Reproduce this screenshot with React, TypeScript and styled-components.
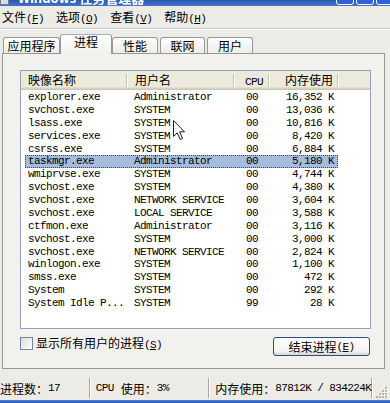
import React from 'react';
import styled, { createGlobalStyle } from 'styled-components';

const Global = createGlobalStyle`
  html, body { margin: 0; padding: 0; background: #ECEBE5; }
  body {
    width: 390px; height: 403px; overflow: hidden;
    font-family: "Noto Sans CJK SC", sans-serif;
    font-size: 12px; color: #000;
  }
  * { box-sizing: border-box; }
`;

const Root = styled.div`
  position: relative;
  width: 390px;
  height: 403px;
  overflow: hidden;
  background: #ECEBE5;
  display: flex;
  flex-direction: column;
`;

const Lat = styled.span<{ $gap?: number }>`
  font-family: "Liberation Mono", monospace;
  font-size: 11px;
  letter-spacing: -0.6px;
  margin-right: ${p => p.$gap ?? 0}px;
`;

const Key = styled.span`
  text-decoration: underline;
  text-underline-offset: 1px;
`;

/* ---------- title bar ---------- */
const TitleBar = styled.div`
  flex-shrink: 0;
  height: 6px;
  overflow: hidden;
  display: flex;
  align-items: flex-end;
  background: linear-gradient(to bottom, #2A58B0, #4474C8);
`;
const TitleIcon = styled.div`
  width: 9px;
  height: 12px;
  margin-bottom: 1px;
  background: #D9DCE4;
  border: 1px solid #6C7A94;
`;
const TitleText = styled.div`
  margin-left: 9px;
  margin-bottom: 1px;
  color: #fff;
  font-weight: bold;
  font-size: 13px;
  line-height: 14px;
  white-space: nowrap;
`;
const TitleButtons = styled.div`
  margin-left: auto;
  margin-right: -4px;
  display: flex;
  gap: 2px;
  align-items: flex-end;
`;
const WinBtn = styled.div`
  width: 18px;
  height: 18px;
  margin-bottom: 1px;
  border: 1px solid #fff;
  border-radius: 3px;
  background: #2F62D2;
`;

/* ---------- menu ---------- */
const MenuBar = styled.div`
  flex-shrink: 0;
  height: 22px;
  display: flex;
  align-items: center;
  gap: 12px;
  padding: 1px 0 0 2px;
`;
const MenuItem = styled.div`
  white-space: nowrap;
  line-height: 14px;
`;
const MenuSep = styled.div`
  flex-shrink: 0;
  height: 2px;
  border-top: 1px solid #BCCBE0;
  border-bottom: 1px solid #FFFFFF;
`;

/* ---------- tabs + panel ---------- */
const Body = styled.div`
  flex-shrink: 0;
  padding: 4px 5px 0 2px;
  display: flex;
  flex-direction: column;
`;
const TabStrip = styled.div`
  position: relative;
  z-index: 1;
  height: 19px;
  display: flex;
  align-items: flex-end;
  padding-left: 1px;
`;
const Tab = styled.div<{ $w: number; $active?: boolean }>`
  width: ${p => (p.$active ? p.$w + 4 : p.$w)}px;
  height: ${p => (p.$active ? 20 : 16)}px;
  margin: ${p => (p.$active ? '0 0 -1px -2px' : '0 2px 0 0')};
  border: 1px solid #919B9C;
  border-bottom: none;
  border-top-color: ${p => (p.$active ? '#9EB0CC' : '#919B9C')};
  border-radius: 3px 3px 0 0;
  background: ${p => (p.$active
    ? 'linear-gradient(to bottom, #FFFFFF, #F2F1ED)'
    : 'linear-gradient(to bottom, #FEFEFE, #EEEDE8)')};
  display: flex;
  justify-content: center;
  align-items: ${p => (p.$active ? 'flex-start' : 'center')};
  line-height: 14px;
  white-space: nowrap;
`;
const Panel = styled.div`
  height: 316px;
  border: 1px solid #919B9C;
  background: #F2F1ED;
  padding: 16px 13px 13px 17px;
  display: flex;
  flex-direction: column;
`;

/* ---------- list ---------- */
const ListBox = styled.div`
  height: 259px;
  border: 1px solid #8FA3BE;
  background: #fff;
  overflow: hidden;
`;
const Header = styled.div`
  height: 19px;
  display: flex;
  background: #EBEADB;
  box-shadow: inset 0 -1px #CBC7B8, inset 0 -2px #D6D2C2, inset 0 -3px #E2DECD;
`;
const HeadCell = styled.div<{ $w: number; $pl?: number; $pr?: number; $right?: boolean }>`
  position: relative;
  width: ${p => p.$w}px;
  padding-left: ${p => p.$pl ?? 0}px;
  padding-right: ${p => p.$pr ?? 0}px;
  text-align: ${p => (p.$right ? 'right' : 'left')};
  line-height: 18px;
  white-space: nowrap;
  &::after {
    content: '';
    position: absolute;
    right: 0;
    top: 3px;
    bottom: 3px;
    width: 1px;
    background: #C7C5B2;
    box-shadow: 1px 0 #FFFFFF;
  }
`;
const Rows = styled.div`
  padding-top: 1px;
`;
const Row = styled.div<{ $sel?: boolean }>`
  display: grid;
  grid-template-columns: 106px 107px 31px 69px;
  width: 313px;
  margin-left: 4px;
  height: 12.875px;
  line-height: 12.875px;
  white-space: nowrap;
  background: ${p => (p.$sel ? '#A6BCDD' : 'transparent')};
  outline: ${p => (p.$sel ? '1px dotted #3A4A66' : 'none')};
  outline-offset: -1px;
  font-family: "Liberation Mono", monospace;
  font-size: 11px;
  letter-spacing: -0.6px;
`;
const Cell = styled.div<{ $pl?: number; $pr?: number; $right?: boolean }>`
  padding-left: ${p => p.$pl ?? 0}px;
  padding-right: ${p => p.$pr ?? 0}px;
  text-align: ${p => (p.$right ? 'right' : 'left')};
  overflow: hidden;
`;

/* ---------- bottom row ---------- */
const BottomRow = styled.div`
  margin-top: 8px;
  height: 18px;
  display: flex;
  align-items: flex-start;
  justify-content: space-between;
`;
const CheckLabel = styled.label`
  display: flex;
  align-items: center;
  gap: 3px;
  height: 13px;
  line-height: 13px;
  white-space: nowrap;
`;
const CheckBox = styled.span`
  width: 13px;
  height: 13px;
  border: 1px solid #6F86A8;
  background: linear-gradient(135deg, #DCDCD7, #FFFFFF);
`;
const Button = styled.div`
  width: 97px;
  height: 19px;
  margin-right: 1px;
  border: 1px solid #2C4F7C;
  border-radius: 3px;
  background: linear-gradient(to bottom, #FFFFFF, #F2F1EC 80%, #D9D5CB);
  display: flex;
  align-items: center;
  justify-content: center;
  line-height: 14px;
  white-space: nowrap;
`;

/* ---------- status bar ---------- */
const StatusBar = styled.div`
  flex-shrink: 0;
  height: 31px;
  padding: 9px 0 2px 0;
  display: flex;
`;
const Pane = styled.div<{ $w?: number; $pl: number; $grow?: boolean }>`
  ${p => (p.$w ? `width: ${p.$w}px;` : '')}
  ${p => (p.$grow ? 'flex: 1;' : '')}
  padding-left: ${p => p.$pl}px;
  display: flex;
  align-items: center;
  white-space: pre;
  border-right: 1px solid #ACA899;
  box-shadow: 1px 0 #FFFFFF;
  margin-right: 1px;
`;
const Grip = styled.div`
  width: 17px;
  display: flex;
  align-items: flex-end;
  justify-content: center;
`;
const BottomFrame = styled.div`
  flex-shrink: 0;
  height: 3px;
  background: linear-gradient(to bottom, #4F7ED6, #2A56BE);
`;

const Cursor = styled.svg`
  position: absolute;
  left: 172px;
  top: 119px;
`;

const rows: [string, string, string, string][] = [
  ['explorer.exe', 'Administrator', '00', '16,352 K'],
  ['svchost.exe', 'SYSTEM', '00', '13,036 K'],
  ['lsass.exe', 'SYSTEM', '00', '10,816 K'],
  ['services.exe', 'SYSTEM', '00', '8,420 K'],
  ['csrss.exe', 'SYSTEM', '00', '6,884 K'],
  ['taskmgr.exe', 'Administrator', '00', '5,180 K'],
  ['wmiprvse.exe', 'SYSTEM', '00', '4,744 K'],
  ['svchost.exe', 'SYSTEM', '00', '4,380 K'],
  ['svchost.exe', 'NETWORK SERVICE', '00', '3,604 K'],
  ['svchost.exe', 'LOCAL SERVICE', '00', '3,588 K'],
  ['ctfmon.exe', 'Administrator', '00', '3,116 K'],
  ['svchost.exe', 'SYSTEM', '00', '3,000 K'],
  ['svchost.exe', 'NETWORK SERVICE', '00', '2,824 K'],
  ['winlogon.exe', 'SYSTEM', '00', '1,100 K'],
  ['smss.exe', 'SYSTEM', '00', '472 K'],
  ['System', 'SYSTEM', '00', '292 K'],
  ['System Idle P...', 'SYSTEM', '99', '28 K'],
];

const menus: [string, string][] = [
  ['文件', 'F'],
  ['选项', 'O'],
  ['查看', 'V'],
  ['帮助', 'H'],
];

const tabs: [string, number][] = [
  ['应用程序', 57],
  ['进程', 48],
  ['性能', 46],
  ['联网', 45],
  ['用户', 46],
];

export default function App() {
  return (
    <Root>
      <Global />
      <TitleBar>
        <TitleIcon />
        <TitleText>Windows 任务管理器</TitleText>
        <TitleButtons>
          <WinBtn />
          <WinBtn />
          <WinBtn />
        </TitleButtons>
      </TitleBar>

      <MenuBar>
        {menus.map(([t, k]) => (
          <MenuItem key={k}>
            {t}
            <Lat>(<Key>{k}</Key>)</Lat>
          </MenuItem>
        ))}
      </MenuBar>
      <MenuSep />

      <Body>
        <TabStrip>
          {tabs.map(([t, w], i) => (
            <Tab key={t} $w={w} $active={i === 1}>{t}</Tab>
          ))}
        </TabStrip>
        <Panel>
          <ListBox>
            <Header>
              <HeadCell $w={106} $pl={7}>映像名称</HeadCell>
              <HeadCell $w={107} $pl={8}>用户名</HeadCell>
              <HeadCell $w={35} $pl={11}><Lat>CPU</Lat></HeadCell>
              <HeadCell $w={69} $pr={5} $right>内存使用</HeadCell>
            </Header>
            <Rows>
              {rows.map((r, i) => (
                <Row key={i} $sel={i === 5}>
                  <Cell $pl={3}>{r[0]}</Cell>
                  <Cell $pl={3}>{r[1]}</Cell>
                  <Cell $pl={8}>{r[2]}</Cell>
                  <Cell $pr={4} $right>{r[3]}</Cell>
                </Row>
              ))}
            </Rows>
          </ListBox>
          <BottomRow>
            <CheckLabel>
              <CheckBox />
              <span>显示所有用户的进程<Lat>(<Key>S</Key>)</Lat></span>
            </CheckLabel>
            <Button>结束进程<Lat>(<Key>E</Key>)</Lat></Button>
          </BottomRow>
        </Panel>
      </Body>

      <StatusBar>
        <Pane $w={91} $pl={0}>进程数：<Lat>17</Lat></Pane>
        <Pane $w={120} $pl={5}><Lat $gap={7}>CPU</Lat>使用：<Lat>3%</Lat></Pane>
        <Pane $grow $pl={5}>内存使用：<Lat>87812K / 834224K</Lat></Pane>
        <Grip>
          <svg width="12" height="12" viewBox="0 0 12 12">
            {[[9, 1], [6, 4], [9, 4], [3, 7], [6, 7], [9, 7], [0, 10], [3, 10], [6, 10], [9, 10]].map(([x, y], i) => (
              <g key={i}>
                <rect x={x + 1} y={y + 1} width="2" height="2" fill="#FFFFFF" />
                <rect x={x} y={y} width="2" height="2" fill="#B8B4A4" />
              </g>
            ))}
          </svg>
        </Grip>
      </StatusBar>
      <BottomFrame />

      <Cursor width="14" height="22" viewBox="0 0 14 22">
        <path
          d="M1.5 1.5 L1.5 17.5 L5.2 13.8 L8.2 20.5 L10.6 19.5 L7.6 12.8 L12.5 12.8 Z"
          fill="#FFFFFF"
          stroke="#222"
          strokeWidth="1"
          strokeLinejoin="round"
        />
      </Cursor>
    </Root>
  );
}
